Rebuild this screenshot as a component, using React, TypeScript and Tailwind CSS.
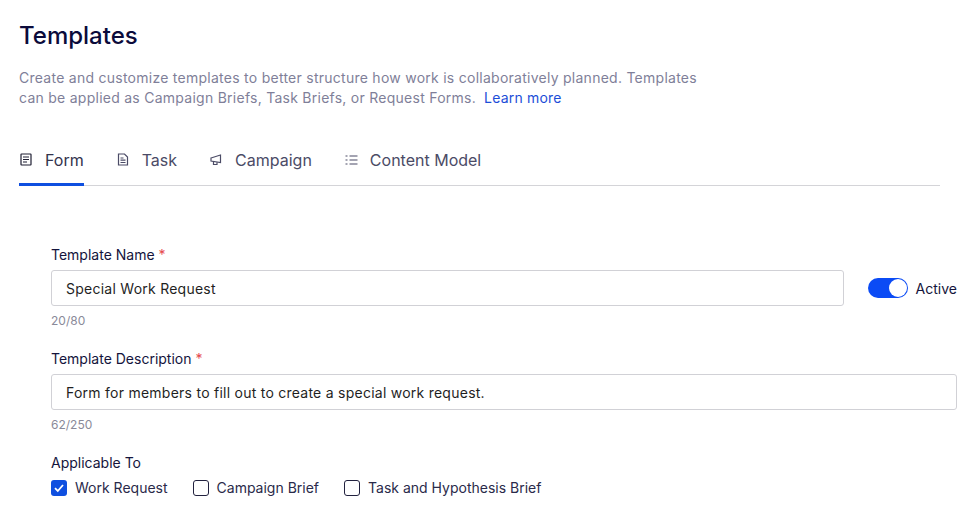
export default function App() {
  return (
    <div className="w-[980px] h-[516px] overflow-hidden bg-white font-['Inter',sans-serif] flex flex-col pl-[19px]">
      <h1 className="mt-[21px] text-[24px] leading-[30px] font-medium text-[#0b0b3b]">Templates</h1>
      <p className="mt-[17px] w-[720px] text-[14px] leading-[20px] text-[#7f7f99] tracking-[0.26px]">
        Create and customize templates to better structure how work is collaboratively planned. Templates<br />
        can be applied as Campaign Briefs, Task Briefs, or Request Forms.<span className="ml-[8px] text-[#1c4ed8] tracking-[0.2px]">Learn more</span>
      </p>
      <div className="mt-[33px] w-[921px] h-[45px] flex border-b border-[#d4d4d8] text-[16px] text-[#4b4b66]">
        <div className="flex items-start gap-[13px] pt-[7px] h-[45px] border-b-[3px] border-[#0f4fe0] text-[#33334d]">
          <svg width="13" height="13" viewBox="0 0 13 13" fill="none" stroke="#1f1f33" strokeWidth="1.200" className="mt-[5px]"><rect x="2" y="1" width="10" height="11" rx="0.500" /><path d="M4 4h6M4 6.500h6M4 9h4" /></svg>
          <span className="leading-[24px]">Form</span>
        </div>
        <div className="flex items-start gap-[13px] pt-[7px] ml-[33px]">
          <svg width="12" height="13" viewBox="0 0 12 13" fill="none" stroke="#4b4b66" strokeWidth="1.200" className="mt-[5px]"><path d="M1.500 1h6l3 3v8h-9z" /><path d="M3.500 5h3M3.500 7.200h5M3.500 9.500h5" /></svg>
          <span className="leading-[24px]">Task</span>
        </div>
        <div className="flex items-start gap-[13px] pt-[7px] ml-[33px]">
          <svg width="12" height="12" viewBox="0 0 12 12" fill="none" stroke="#4b4b66" strokeWidth="1.200" className="mt-[6px]"><path d="M1 4 10.500 1v7.500L1 7z" /><path d="M3.500 7.500v3h3.500V8.200" /></svg>
          <span className="leading-[24px]">Campaign</span>
        </div>
        <div className="flex items-start gap-[12px] pt-[7px] ml-[33px]">
          <svg width="13" height="12" viewBox="0 0 13 12" fill="none" stroke="#4b4b66" strokeWidth="1.200" className="mt-[6px]"><path d="M0.500 2h2M4.500 2h8M0.500 6h2M4.500 6h8M0.500 10h2M4.500 10h8" /></svg>
          <span className="leading-[24px]">Content Model</span>
        </div>
      </div>

      <div className="ml-[32px] mt-[59px] w-[906px] flex flex-col">
        <label className="text-[14px] leading-[20px] text-[#14143c]">Template Name <span className="text-[#e5484d]">*</span></label>
        <div className="flex items-center mt-[5px]">
          <div className="w-[793px] h-[36px] border border-[#d1d1d6] rounded-[3px] px-[14px] flex items-center text-[14px] text-[#1f1f1f] tracking-[0.25px]">Special Work Request</div>
          <div className="ml-[24px] w-[40px] h-[20px] rounded-full bg-[#0b4bf5] relative shrink-0">
            <div className="absolute right-[1px] top-[1px] w-[18px] h-[18px] rounded-full bg-white" />
          </div>
          <span className="ml-[8px] text-[14px] text-[#14143c]">Active</span>
        </div>
        <div className="mt-[8px] text-[12px] leading-[14px] text-[#8a8a99]">20/80</div>

        <label className="mt-[21px] text-[14px] leading-[20px] text-[#14143c]">Template Description <span className="text-[#e5484d]">*</span></label>
        <div className="mt-[5px] w-[906px] h-[36px] border border-[#d1d1d6] rounded-[3px] px-[14px] flex items-center text-[14px] text-[#1f1f1f] tracking-[0.25px]">Form for members to fill out to create a special work request.</div>
        <div className="mt-[8px] text-[12px] leading-[14px] text-[#8a8a99]">62/250</div>

        <label className="mt-[21px] text-[14px] leading-[20px] text-[#14143c]">Applicable To</label>
        <div className="mt-[5px] flex items-center text-[14px] leading-[20px] text-[#2a2a4a]">
          <span className="w-[16px] h-[16px] rounded-[3px] bg-[#0f4fe0] flex items-center justify-center">
            <svg width="12" height="12" viewBox="0 0 12 12" fill="none" stroke="#fff" strokeWidth="1.800"><path d="M2 6.200 4.800 9 10 3" /></svg>
          </span>
          <span className="ml-[8px]">Work Request</span>
          <span className="ml-[25px] w-[16px] h-[16px] rounded-[3px] border-[1.5px] border-[#22223f]" />
          <span className="ml-[8px]">Campaign Brief</span>
          <span className="ml-[25px] w-[16px] h-[16px] rounded-[3px] border-[1.5px] border-[#22223f]" />
          <span className="ml-[8px]">Task and Hypothesis Brief</span>
        </div>
      </div>
    </div>
  );
}
